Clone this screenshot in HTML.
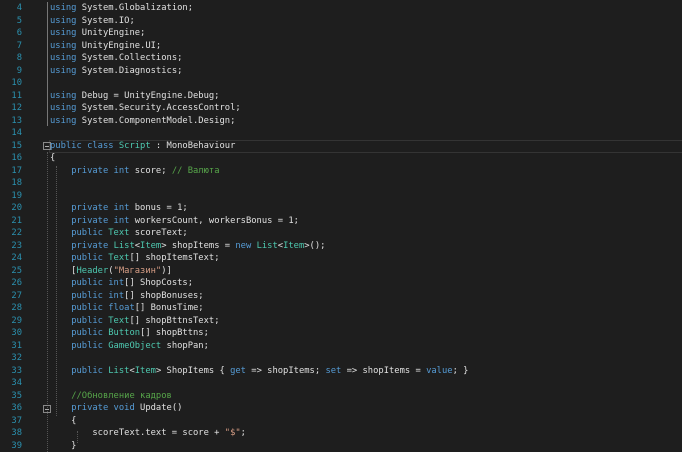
<!DOCTYPE html><html><head><meta charset="utf-8"><style>
body{margin:0;width:682px;height:452px;background:#1e1e1e;overflow:hidden;font-family:"DejaVu Sans Mono","Liberation Mono",monospace;font-size:8.8px;color:#e0e0e0}
.l{position:absolute;left:0;height:12.5px;line-height:12.5px;white-space:pre;width:682px}
.n{position:absolute;left:0;width:22px;text-align:right;color:#2b91af}
.c{position:absolute;left:50px}
.k{color:#569cd6}.t{color:#4ec9b0}.g{color:#57a64a}.s{color:#d69d85}
.cur{position:absolute;left:49px;top:140px;width:640px;height:11px;border:1px solid #343434}
.v{position:absolute;border-left:1px dotted #555}
.box{position:absolute;width:6px;height:6px;border:1px solid #888;left:43px}
.box:after{content:"";position:absolute;left:1px;top:2.5px;width:4px;height:1px;background:#aaa}
</style></head><body>
<div class="cur"></div>
<div class="v" style="left:47px;top:2px;height:124px;border-left:1px solid #777"></div>
<div class="v" style="left:47px;top:152px;height:300px"></div>
<div class="v" style="left:56px;top:166px;height:250px"></div>
<div class="v" style="left:77px;top:431px;height:12px"></div>
<div class="box" style="top:142px"></div>
<div class="box" style="top:405px"></div>
<div class="l" style="top:2px"><span class="n">4</span><span class="c"><span class="k">using</span> System.Globalization;</span></div>
<div class="l" style="top:14.5px"><span class="n">5</span><span class="c"><span class="k">using</span> System.IO;</span></div>
<div class="l" style="top:27px"><span class="n">6</span><span class="c"><span class="k">using</span> UnityEngine;</span></div>
<div class="l" style="top:39.5px"><span class="n">7</span><span class="c"><span class="k">using</span> UnityEngine.UI;</span></div>
<div class="l" style="top:52px"><span class="n">8</span><span class="c"><span class="k">using</span> System.Collections;</span></div>
<div class="l" style="top:64.5px"><span class="n">9</span><span class="c"><span class="k">using</span> System.Diagnostics;</span></div>
<div class="l" style="top:77px"><span class="n">10</span></div>
<div class="l" style="top:89.5px"><span class="n">11</span><span class="c"><span class="k">using</span> Debug = UnityEngine.Debug;</span></div>
<div class="l" style="top:102px"><span class="n">12</span><span class="c"><span class="k">using</span> System.Security.AccessControl;</span></div>
<div class="l" style="top:114.5px"><span class="n">13</span><span class="c"><span class="k">using</span> System.ComponentModel.Design;</span></div>
<div class="l" style="top:127px"><span class="n">14</span></div>
<div class="l" style="top:139.5px"><span class="n">15</span><span class="c"><span class="k">public class</span> <span class="t">Script</span> : MonoBehaviour</span></div>
<div class="l" style="top:152px"><span class="n">16</span><span class="c">{</span></div>
<div class="l" style="top:164.5px"><span class="n">17</span><span class="c">    <span class="k">private int</span> score; <span class="g">// Валюта</span></span></div>
<div class="l" style="top:177px"><span class="n">18</span></div>
<div class="l" style="top:189.5px"><span class="n">19</span></div>
<div class="l" style="top:202px"><span class="n">20</span><span class="c">    <span class="k">private int</span> bonus = 1;</span></div>
<div class="l" style="top:214.5px"><span class="n">21</span><span class="c">    <span class="k">private int</span> workersCount, workersBonus = 1;</span></div>
<div class="l" style="top:227px"><span class="n">22</span><span class="c">    <span class="k">public</span> <span class="t">Text</span> scoreText;</span></div>
<div class="l" style="top:239.5px"><span class="n">23</span><span class="c">    <span class="k">private</span> <span class="t">List</span>&lt;<span class="t">Item</span>&gt; shopItems = <span class="k">new</span> <span class="t">List</span>&lt;<span class="t">Item</span>&gt;();</span></div>
<div class="l" style="top:252px"><span class="n">24</span><span class="c">    <span class="k">public</span> <span class="t">Text</span>[] shopItemsText;</span></div>
<div class="l" style="top:264.5px"><span class="n">25</span><span class="c">    [<span class="t">Header</span>(<span class="s">"Магазин"</span>)]</span></div>
<div class="l" style="top:277px"><span class="n">26</span><span class="c">    <span class="k">public int</span>[] ShopCosts;</span></div>
<div class="l" style="top:289.5px"><span class="n">27</span><span class="c">    <span class="k">public int</span>[] shopBonuses;</span></div>
<div class="l" style="top:302px"><span class="n">28</span><span class="c">    <span class="k">public float</span>[] BonusTime;</span></div>
<div class="l" style="top:314.5px"><span class="n">29</span><span class="c">    <span class="k">public</span> <span class="t">Text</span>[] shopBttnsText;</span></div>
<div class="l" style="top:327px"><span class="n">30</span><span class="c">    <span class="k">public</span> <span class="t">Button</span>[] shopBttns;</span></div>
<div class="l" style="top:339.5px"><span class="n">31</span><span class="c">    <span class="k">public</span> <span class="t">GameObject</span> shopPan;</span></div>
<div class="l" style="top:352px"><span class="n">32</span></div>
<div class="l" style="top:364.5px"><span class="n">33</span><span class="c">    <span class="k">public</span> <span class="t">List</span>&lt;<span class="t">Item</span>&gt; ShopItems { <span class="k">get</span> =&gt; shopItems; <span class="k">set</span> =&gt; shopItems = <span class="k">value</span>; }</span></div>
<div class="l" style="top:377px"><span class="n">34</span></div>
<div class="l" style="top:389.5px"><span class="n">35</span><span class="c">    <span class="g">//Обновление кадров</span></span></div>
<div class="l" style="top:402px"><span class="n">36</span><span class="c">    <span class="k">private void</span> Update()</span></div>
<div class="l" style="top:414.5px"><span class="n">37</span><span class="c">    {</span></div>
<div class="l" style="top:427px"><span class="n">38</span><span class="c">        scoreText.text = score + <span class="s">"$"</span>;</span></div>
<div class="l" style="top:439.5px"><span class="n">39</span><span class="c">    }</span></div>
</body></html>
